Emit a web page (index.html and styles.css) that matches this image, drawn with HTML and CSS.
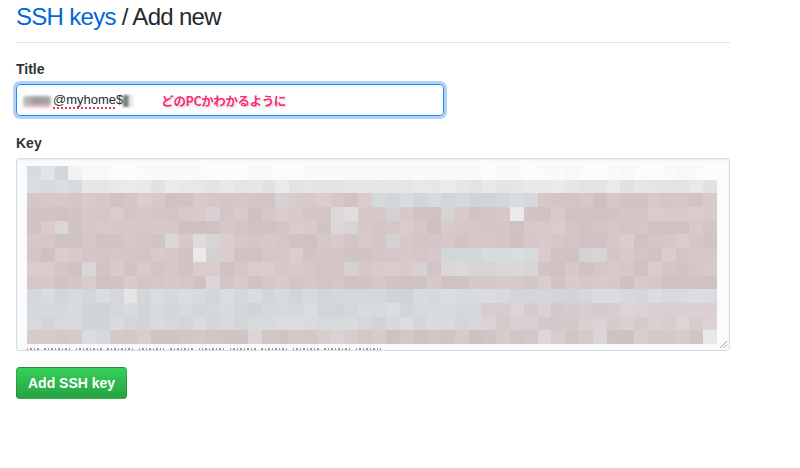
FILE: index.html
```html
<!DOCTYPE html>
<html lang="ja">
<head>
<meta charset="utf-8">
<title>SSH keys / Add new</title>
<link rel="stylesheet" href="styles.css">
</head>
<body>
<div class="page">
  <h2 class="subhead"><a class="crumb" href="#">SSH keys</a> / Add new</h2>

  <form class="key-form">
    <label class="field-label label-title" for="key-title">Title</label>
    <div class="text-input" id="key-title">
      <span class="redact"></span>
      <span class="typed"><span class="misspelt">@myhome</span>$</span>
      <span class="smear"></span>
      <span class="note">どのPCかわかるように</span>
    </div>

    <label class="field-label label-key">Key</label>
    <div class="key-field">
      <div class="mosaic" id="mosaic"></div>
      <div class="cut-line"></div>
      <svg class="grip" width="9" height="9" viewBox="0 0 9 9">
        <path d="M8 1 L1 8 M8 4.5 L4.5 8" stroke="#9a9a9a" stroke-width="1" fill="none"/>
      </svg>
    </div>

    <button class="btn-primary" type="button">Add SSH key</button>
  </form>
</div>
<script src="mosaic.js"></script>
</body>
</html>
```

FILE: styles.css
```css
html, body {
  margin: 0;
  padding: 0;
  background: #fff;
}

body {
  font-family: "Liberation Sans", Arial, sans-serif;
  color: #24292e;
  font-size: 14px;
}

.page {
  width: 714px;
  padding: 0 16px;
}

.subhead {
  margin: 0;
  padding: 2px 0 10px;
  font-size: 24px;
  line-height: 30px;
  font-weight: 400;
  letter-spacing: -0.7px;
  border-bottom: 1px solid #e1e4e8;
}

.crumb {
  color: #0366d6;
  text-decoration: none;
}

.key-form {
  display: flex;
  flex-direction: column;
  align-items: flex-start;
}

.field-label {
  display: block;
  font-weight: 700;
  font-size: 14px;
  line-height: 20px;
  margin-bottom: 5px;
  color: #2f3337;
}

.label-title {
  margin-top: 16px;
}

.label-key {
  margin-top: 17px;
}

/* title input, shown focused */
.text-input {
  box-sizing: border-box;
  width: 428px;
  height: 32px;
  border: 1px solid #2188ff;
  border-radius: 4px;
  box-shadow: 0 0 0 3px rgba(3, 102, 214, 0.3);
  display: flex;
  align-items: center;
  padding-left: 6px;
  font-size: 13px;
  color: #24292e;
}

.redact {
  width: 28px;
  height: 9px;
  margin-top: 1px;
  background: linear-gradient(90deg, #c4c4c4 0%, #9c9c9c 45%, #a8a8a8 100%);
  box-shadow: 0 3px 0 #efc4c8;
  filter: blur(1.5px);
  border-radius: 2px;
}

.typed {
  margin-left: 2px;
  line-height: 16px;
}

.misspelt {
  text-decoration: underline dotted #f0364a;
  text-decoration-thickness: 1.5px;
  text-underline-offset: 3px;
}

.smear {
  width: 11px;
  height: 12px;
  margin-top: 1px;
  background: linear-gradient(90deg, #7e7e7e 0 40%, #e3e3e3 60%, #f4f4f4 100%);
  filter: blur(0.8px);
}

.note {
  margin-left: 27px;
  font-family: "Noto Sans CJK JP", "Noto Sans", sans-serif;
  font-weight: 700;
  font-size: 12.5px;
  letter-spacing: -0.4px;
  color: #fb2c70;
  text-shadow: 0 0 2px #fff, 0 0 1px #fff, 1px 1px 2px rgba(0, 0, 0, 0.22);
}

/* public key textarea */
.key-field {
  position: relative;
  box-sizing: border-box;
  width: 714px;
  height: 193px;
  border: 1px solid #d8dbdf;
  border-radius: 3px;
  background: #fafbfc;
  box-shadow: inset 0 1px 2px rgba(27, 31, 35, 0.075);
  padding: 7px 0 0 10px;
  overflow: hidden;
}

.mosaic {
  width: 690px;
  height: 178px;
  display: grid;
  grid-template-columns: repeat(50, 1fr);
  grid-template-rows: repeat(13, 1fr);
}

.cut-line {
  margin-top: 4px;
  width: 359px;
  height: 2px;
  background:
    repeating-linear-gradient(90deg, transparent 0 13px, #fafbfc 13px 17px, transparent 17px 31px),
    repeating-linear-gradient(90deg, rgba(70, 70, 70, 0.55) 0 1.5px, transparent 1.5px 3.5px);
}

.grip {
  position: absolute;
  right: 1px;
  bottom: 1px;
}

.btn-primary {
  margin-top: 16px;
  box-sizing: border-box;
  height: 32px;
  padding: 0 11px;
  border: 1px solid rgba(27, 31, 35, 0.2);
  border-radius: 4px;
  background: linear-gradient(180deg, #34d058 0%, #28a745 90%);
  color: #fff;
  font-family: "Liberation Sans", Arial, sans-serif;
  font-weight: 700;
  font-size: 14px;
  line-height: 20px;
  cursor: pointer;
}
```

FILE: mosaic.js
```js
(function () {
  var rows = [
    "glgW" + rep("w", 46),
    "gggg" + rep("l", 46),
    rep("p", 25) + rep("g", 12) + rep("p", 13),
    rep("p", 22) + "hh" + rep("p", 11) + "H" + rep("p", 14),
    rep("p", 22) + "m" + rep("p", 27),
    rep("p", 10) + "m" + "p" + "h" + rep("p", 37),
    rep("p", 12) + "H" + rep("p", 17) + rep("g", 7) + rep("p", 13),
    rep("p", 30) + rep("m", 7) + rep("p", 13),
    rep("p", 50),
    rep("g", 7) + "l" + rep("g", 42),
    rep("g", 33) + rep("q", 17),
    rep("g", 33) + rep("q", 17),
    rep("p", 4) + "gg" + rep("p", 43) + "l"
  ];

  var base = {
    p: [213, 199, 200, 6],
    q: [218, 207, 208, 5],
    g: [213, 217, 219, 5],
    l: [228, 230, 232, 4],
    w: [249, 250, 251, 2],
    W: [240, 242, 243, 1],
    h: [224, 218, 219, 3],
    H: [234, 232, 233, 2],
    m: [216, 212, 214, 4]
  };

  function rep(c, n) {
    return new Array(n + 1).join(c);
  }

  var seed = 20190412;
  function rand() {
    seed |= 0;
    seed = (seed + 0x6d2b79f5) | 0;
    var t = Math.imul(seed ^ (seed >>> 15), 1 | seed);
    t = (t + Math.imul(t ^ (t >>> 7), 61 | t)) ^ t;
    return ((t ^ (t >>> 14)) >>> 0) / 4294967296;
  }

  var host = document.getElementById("mosaic");
  rows.forEach(function (row) {
    for (var i = 0; i < row.length; i++) {
      var kind = row[i];
      if ((kind === "p" || kind === "q") && rand() < 0.07) kind = "m";
      var b = base[kind];
      var d = Math.round((rand() * 2 - 1) * b[3]);
      var cell = document.createElement("div");
      cell.style.background =
        "rgb(" + (b[0] + d) + "," + (b[1] + d) + "," + (b[2] + d) + ")";
      host.appendChild(cell);
    }
  });
})();
```
